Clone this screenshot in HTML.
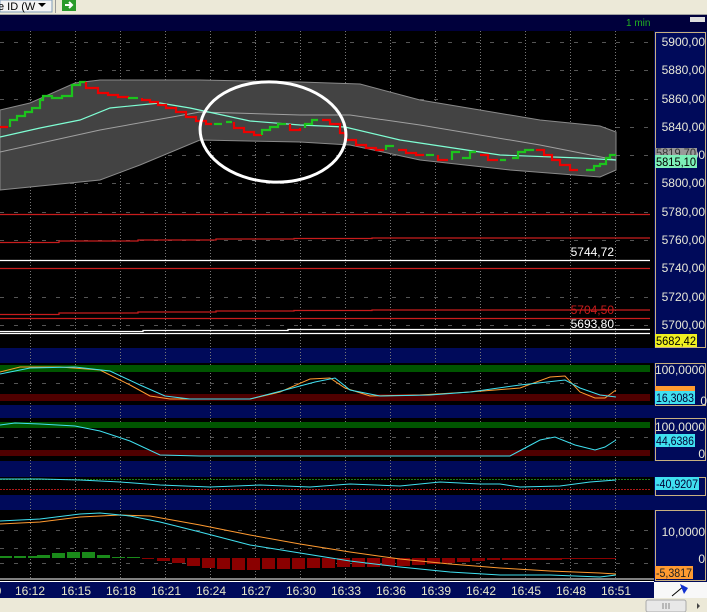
<!DOCTYPE html>
<html><head><meta charset="utf-8"><style>
html,body{margin:0;padding:0;background:#000;width:707px;height:612px;overflow:hidden}
svg{display:block;font-family:"Liberation Sans",sans-serif}
</style></head><body>
<svg width="707" height="612" xmlns="http://www.w3.org/2000/svg">
<rect x="0" y="0" width="707" height="15" fill="#ece9d8"/>
<rect x="0" y="0" width="52" height="12" fill="#f4f4f4" stroke="#7f9db9"/>
<text x="-2" y="10" font-size="11" fill="#000">e ID (W</text>
<path d="M38 3h8l-4 4z" fill="#000"/>
<rect x="55" y="0" width="1" height="13" fill="#999"/>
<rect x="62" y="0" width="14" height="11" fill="#2a9a2a"/>
<path d="M65 5h6M69 2l3 3-3 3" stroke="#fff" stroke-width="2" fill="none"/>
<rect x="0" y="14" width="707" height="1" fill="#a0a0a0"/>
<rect x="0" y="15" width="707" height="16" fill="#00003c"/>
<text x="626" y="26" font-size="10" fill="#22b022">1 min</text>
<rect x="690" y="17" width="15" height="5" fill="#ddd"/>
<rect x="0" y="31" width="654" height="551" fill="#000"/>
<rect x="0" y="348" width="654" height="15" fill="#000a5a"/>
<rect x="0" y="405" width="654" height="13" fill="#000a5a"/>
<rect x="0" y="461" width="654" height="16" fill="#000a5a"/>
<rect x="0" y="495" width="654" height="15" fill="#000a5a"/>
<rect x="654" y="31" width="53" height="551" fill="#000a5a"/>
<rect x="655.5" y="32.5" width="50" height="315" fill="none" stroke="#c8b080"/>
<rect x="655.5" y="363.5" width="50" height="42" fill="none" stroke="#c8b080"/>
<rect x="655.5" y="418.5" width="50" height="42" fill="none" stroke="#c8b080"/>
<rect x="655.5" y="477.5" width="50" height="18" fill="none" stroke="#c8b080"/>
<rect x="655.5" y="510.5" width="50" height="70" fill="none" stroke="#c8b080"/>
<g stroke="#777" stroke-width="1" stroke-dasharray="1,2">
<path d="M30.5 31V580M75.5 31V580M120.5 31V580M165.5 31V580M210.5 31V580M255.5 31V580M300.5 31V580M345.5 31V580M390.5 31V580M435.5 31V580M480.5 31V580M525.5 31V580M570.5 31V580M615.5 31V580"/>
</g>
<g stroke="#555" stroke-dasharray="4,10">
<path d="M0 42.5H652M0 70.5H652M0 99.5H652M0 127.5H652M0 155.5H652M0 183.5H652M0 212.5H652M0 240.5H652M0 268.5H652M0 297.5H652M0 325.5H652"/>
<path d="M0 383.5H652M0 437.5H652M0 530.5H652M0 548.5H652M0 563.5H652"/>
</g>
<path d="M0 110L30 103L75 83L100 80L200 80L300 82L360 84L420 100L480 110L540 120L600 126L616 132L616 170L600 177L510 170L420 160L350 145L300 142L200 140L140 165L100 180L0 190Z" fill="#434343" stroke="#8a8a8a" stroke-width="1"/>
<path d="M0 152L100 130L200 112L300 115L350 115L420 125L540 145L616 160" fill="none" stroke="#a0a0a0"/>
<path d="M0 137L40 128L80 120L110 108L160 103L190 108L250 121L300 125L345 127L400 140L500 155L580 158L616 160" fill="none" stroke="#7fffd4" stroke-width="1.2"/>
<g fill="none" stroke-width="2.2">
<path d="M0 127H8" stroke="#e00"/>
<path d="M10 127V120H17V116H25V112H32V108H40V100H43V96H52V98H62V96H72V85H80V82H86" stroke="#1cc41c"/>
<path d="M86 82V88H98V93H108V95H118V97H128V98" stroke="#e00"/>
<path d="M128 98H138" stroke="#1cc41c"/>
<path d="M142 98V100H150V102H158V105H166V108H176V112H186V117H196V121H206V124H212" stroke="#e00"/>
<path d="M214 124H222M226 122H232" stroke="#1cc41c"/>
<path d="M234 122V128H244V132H254V135H262" stroke="#e00"/>
<path d="M262 135V130H270V127H278V124H286" stroke="#1cc41c"/>
<path d="M290 124V130H300V128" stroke="#e00"/>
<path d="M305 128V124H312V120H318" stroke="#1cc41c"/>
<path d="M322 120H330V124H340V133H345V140H356V145H366V148H376V150H384" stroke="#e00"/>
<path d="M386 150V146H394" stroke="#1cc41c"/>
<path d="M398 150H406V153H416V155H424" stroke="#e00"/>
<path d="M426 155H434" stroke="#1cc41c"/>
<path d="M438 155V160H448" stroke="#e00"/>
<path d="M452 160V152H460M462 158H470V152H476" stroke="#1cc41c"/>
<path d="M480 155H488V160H498" stroke="#e00"/>
<path d="M500 160H506M512 158H518V152H525V150H534V150" stroke="#1cc41c"/>
<path d="M536 150H544V155H552V160H560V165H570V170H578" stroke="#e00"/>
<path d="M586 170H594V166H600V164H606V158H610V155H616" stroke="#1cc41c"/>
</g>
<g fill="none" stroke-width="1.3">
<path d="M0 214.5H650" stroke="#c81c1c"/>
<path d="M0 242.5H59V241H138V240H216V239H294V238.5H372V238H650" stroke="#c81c1c"/>
<path d="M0 260.5H650" stroke="#fff"/>
<path d="M0 268.5H650" stroke="#c81c1c"/>
<path d="M0 314.5H59V313H138V312H216V311H294V310.5H372V310H650" stroke="#c81c1c"/>
<path d="M0 318.5H650" stroke="#c81c1c"/>
<path d="M0 331.5H143V330.5H288V329.5H650" stroke="#fff"/>
<path d="M0 333.5H650" stroke="#fff"/>
</g>
<text x="614" y="256" font-size="12" fill="#fff" text-anchor="end">5744,72</text>
<text x="614" y="314" font-size="12" fill="#c81c1c" text-anchor="end">5704,50</text>
<text x="614" y="328" font-size="12" fill="#fff" text-anchor="end">5693,80</text>
<ellipse cx="273" cy="132" rx="73" ry="50" fill="none" stroke="#fff" stroke-width="3" transform="rotate(4 273 132)"/>
<g font-size="12" fill="#e8e8d8" text-anchor="end">
<text x="705" y="46">5900,00</text><text x="705" y="74">5880,00</text><text x="705" y="103">5860,00</text><text x="705" y="131">5840,00</text>
<text x="705" y="159">5820,00</text>
<text x="705" y="187">5800,00</text><text x="705" y="216">5780,00</text><text x="705" y="244">5760,00</text><text x="705" y="272">5740,00</text><text x="705" y="301">5720,00</text><text x="705" y="329">5700,00</text>
</g>
<rect x="655" y="148" width="42" height="9" fill="#999"/>
<text x="656" y="157" font-size="12" fill="#333" textLength="40" lengthAdjust="spacingAndGlyphs">5819,70</text>
<rect x="655" y="155" width="42" height="13" fill="#7cf0b8"/>
<text x="656" y="166" font-size="12" fill="#000" textLength="40" lengthAdjust="spacingAndGlyphs">5815,10</text>
<rect x="655" y="334" width="42" height="13" fill="#f0f020"/>
<text x="656" y="345" font-size="12" fill="#000" textLength="40" lengthAdjust="spacingAndGlyphs">5682,42</text>
<rect x="0" y="365" width="650" height="7" fill="#005500"/>
<rect x="0" y="394" width="650" height="7" fill="#500000"/>
<path d="M0 372L20 367L60 367L100 370L130 385L150 396L170 399L250 399L280 392L310 379L330 378L345 388L370 396L420 395L470 392L520 388L550 377L565 376L580 392L595 398L605 398L616 390" fill="none" stroke="#ff9a30"/>
<path d="M0 374L30 368L75 367L110 371L140 385L165 396L190 399L250 399L285 390L315 382L335 378L350 390L380 396L430 395L470 392L520 385L565 380L580 388L600 395L616 397" fill="none" stroke="#40e0f0"/>
<rect x="0" y="422" width="650" height="6" fill="#005500"/>
<rect x="0" y="450" width="650" height="6" fill="#500000"/>
<path d="M0 425L15 423L40 424L75 426L100 431L130 441L160 455L200 456L300 456L510 456L525 448L540 440L555 437L575 445L595 450L605 447L616 440" fill="none" stroke="#40e0f0"/>
<path d="M0 479.5H650" stroke="#1a7a1a" stroke-dasharray="2,1"/>
<path d="M0 489.5H650" stroke="#b01818" stroke-dasharray="2,1"/>
<path d="M0 479L40 479L80 480L120 482L160 485L210 487L260 485L310 487L350 484L400 486L440 482L480 484L500 484L520 487L560 486L590 482L616 480" fill="none" stroke="#40e0f0"/>
<g fill="#1a8a1a">
<rect x="0" y="556" width="12" height="2"/><rect x="14" y="556" width="12" height="2"/><rect x="28" y="556" width="12" height="2"/><rect x="37" y="555" width="13" height="3"/><rect x="52" y="553" width="13" height="5"/><rect x="67" y="552" width="13" height="6"/><rect x="82" y="552" width="13" height="6"/><rect x="97" y="555" width="13" height="3"/><rect x="112" y="557" width="13" height="1"/><rect x="127" y="557" width="13" height="1"/>
</g>
<g fill="#8a0000">
<rect x="142" y="558" width="12" height="1"/><rect x="157" y="558" width="13" height="3"/><rect x="172" y="558" width="13" height="5"/><rect x="187" y="558" width="13" height="8"/><rect x="202" y="558" width="13" height="10"/><rect x="217" y="558" width="13" height="11"/><rect x="232" y="558" width="13" height="12"/><rect x="247" y="558" width="13" height="12"/><rect x="262" y="558" width="13" height="11"/><rect x="277" y="558" width="13" height="11"/><rect x="292" y="558" width="13" height="11"/><rect x="307" y="558" width="13" height="10"/><rect x="322" y="558" width="13" height="10"/><rect x="337" y="558" width="13" height="9"/><rect x="352" y="558" width="13" height="9"/><rect x="367" y="558" width="13" height="9"/><rect x="382" y="558" width="13" height="8"/><rect x="397" y="558" width="13" height="8"/><rect x="412" y="558" width="13" height="7"/><rect x="427" y="558" width="13" height="6"/><rect x="442" y="558" width="13" height="5"/><rect x="457" y="558" width="13" height="4"/><rect x="472" y="558" width="13" height="3"/><rect x="487" y="558" width="13" height="2"/><rect x="502" y="558" width="60" height="2"/><rect x="562" y="558" width="54" height="1"/>
</g>
<path d="M0 524L40 522L80 517L120 515L150 516L200 525L250 535L300 544L350 552L400 559L450 564L500 568L550 571L600 573L616 574" fill="none" stroke="#ff9a30"/>
<path d="M0 521L40 519L80 514L100 513L130 516L160 522L200 532L250 545L300 553L350 561L400 567L450 572L500 575L550 575L600 577L616 575" fill="none" stroke="#40e0f0"/>
<path d="M0 579H654M0 581.5H654" stroke="#fff"/>
<g font-size="12" fill="#e8e8d8" text-anchor="end">
<text x="705" y="374">100,0000</text><text x="707" y="405">0</text>
<text x="705" y="431">100,0000</text><text x="705" y="458">0</text>
<text x="705" y="536">10,0000</text><text x="705" y="563">0</text>
</g>
<rect x="655" y="386" width="40" height="8" fill="#ff9a30"/>
<rect x="655" y="391" width="40" height="13" fill="#40e0f0"/>
<text x="656" y="402" font-size="12" fill="#003" textLength="38" lengthAdjust="spacingAndGlyphs">16,3083</text>
<rect x="655" y="434" width="40" height="13" fill="#40e0f0"/>
<text x="656" y="445" font-size="12" fill="#003" textLength="38" lengthAdjust="spacingAndGlyphs">44,6386</text>
<rect x="655" y="477" width="44" height="13" fill="#40e0f0"/>
<text x="656" y="488" font-size="12" fill="#003" textLength="42" lengthAdjust="spacingAndGlyphs">-40,9207</text>
<rect x="655" y="566" width="38" height="13" fill="#ff9a30"/>
<text x="656" y="577" font-size="12" fill="#222" textLength="36" lengthAdjust="spacingAndGlyphs">-5,3817</text>
<rect x="0" y="582" width="654" height="16" fill="#000a5a"/>
<g font-size="12" fill="#e8e8c8" text-anchor="middle">
<text x="-2" y="595">0</text><text x="30" y="595">16:12</text><text x="76" y="595">16:15</text><text x="121" y="595">16:18</text><text x="166" y="595">16:21</text><text x="211" y="595">16:24</text><text x="256" y="595">16:27</text><text x="301" y="595">16:30</text><text x="346" y="595">16:33</text><text x="391" y="595">16:36</text><text x="436" y="595">16:39</text><text x="481" y="595">16:42</text><text x="526" y="595">16:45</text><text x="571" y="595">16:48</text><text x="616" y="595">16:51</text>
</g>
<rect x="654" y="582" width="53" height="16" fill="#f8f8f8"/>
<path d="M672 596L684 586" stroke="#000" stroke-width="1"/>
<path d="M680 584L688 588L684 594Z" fill="#1030d0"/>
<rect x="0" y="598" width="707" height="14" fill="#ece9d8"/>
<rect x="646" y="600" width="40" height="12" rx="2" fill="#e8e8e8" stroke="#aaa"/>
<path d="M663 603v6M666 603v6M669 603v6" stroke="#888"/>
<path d="M697 603l3 3-3 3z" fill="#444"/>
</svg>
</body></html>
